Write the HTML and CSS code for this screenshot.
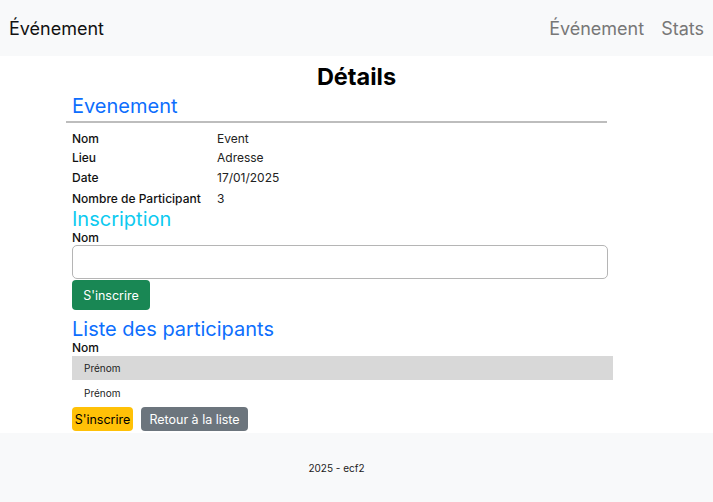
FILE: index.html
```html
<!DOCTYPE html>
<html lang="fr">
<head>
<meta charset="utf-8">
<title>Détails</title>
<link rel="stylesheet" href="styles.css">
</head>
<body>
<header class="topbar">
  <div class="brand">Événement</div>
  <nav class="nav">
    <a class="nav-link">Événement</a>
    <a class="nav-link">Stats</a>
  </nav>
</header>
<main class="main">
  <h1 class="page-title">Détails</h1>
  <section class="content">
    <h2 class="section-title blue first">Evenement</h2>
    <hr class="rule">
    <dl class="details">
      <dt>Nom</dt><dd>Event</dd>
      <dt>Lieu</dt><dd>Adresse</dd>
      <dt class="tall">Date</dt><dd class="tall">17/01/2025</dd>
      <dt class="tall">Nombre de Participant</dt><dd class="tall">3</dd>
    </dl>
    <h2 class="section-title cyan insc">Inscription</h2>
    <label class="label">Nom</label>
    <input class="field" type="text">
    <button class="btn btn-green">S'inscrire</button>
    <h2 class="section-title blue list-title">Liste des participants</h2>
    <div class="label">Nom</div>
    <div class="table">
      <div class="trow grey">Prénom</div>
      <div class="trow">Prénom</div>
    </div>
    <div class="actions">
      <button class="btn btn-yellow">S'inscrire</button>
      <button class="btn btn-grey">Retour à la liste</button>
    </div>
  </section>
</main>
<footer class="footer">2025 - ecf2</footer>
</body>
</html>
```
FILE: styles.css
```css
* { box-sizing: border-box; }
html, body { margin: 0; padding: 0; }
body {
  font-family: Inter, "Liberation Sans", sans-serif;
  color: #111;
  background: #fff;
}
.topbar {
  height: 56px;
  background: #f8f9fa;
  display: flex;
  align-items: center;
  justify-content: space-between;
  padding: 0 9px 0 9px;
}
.brand { font-size: 18px; color: #111; }
.nav { display: flex; gap: 17px; }
.nav-link { font-size: 18px; color: #777; }
.main { height: 377px; }
.page-title {
  margin: 0;
  padding-top: 9px;
  text-align: center;
  font-size: 23.5px;
  font-weight: 700;
  line-height: 24px;
  color: #000;
}
.content { padding: 0 0 0 66px; width: 614px; }
.section-title {
  margin: 0;
  font-weight: 400;
  font-size: 20px;
  line-height: 24px;
  padding-left: 6px;
}
.section-title.first { margin-top: 5px; }
.section-title.insc { margin-top: -2px; }
.blue { color: #0d6efd; }
.cyan { color: #0dcaf0; }
.rule {
  margin: 3px 0 0 0;
  width: 541px;
  border: 0;
  border-top: 2px solid #bdbdbd;
}
.details {
  margin: 6px 0 0 6px;
  display: grid;
  grid-template-columns: 145px 1fr;
  font-size: 12px;
}
.details dt { font-weight: 500; line-height: 19px; color: #111; }
.details dd { margin: 0; line-height: 19px; color: #222; }
.details .tall { line-height: 21px; }
.label {
  display: block;
  margin-left: 6px;
  font-size: 12px;
  line-height: 14px;
  font-weight: 500;
  color: #111;
}
.field {
  display: block;
  margin: 0 0 0 6px;
  width: 536px;
  height: 34px;
  border: 1px solid #b5b5b5;
  border-radius: 5px;
  background: #fff;
}
.btn {
  font-family: Inter, "Liberation Sans", sans-serif;
  font-size: 12.5px;
  border: 0;
  border-radius: 4px;
  cursor: pointer;
}
.btn-green {
  display: block;
  margin: 1px 0 0 6px;
  width: 78px;
  height: 30px;
  background: #198754;
  color: #fff;
}
.list-title { margin-top: 7px; }
.table { margin: 1px 0 0 6px; width: 541px; }
.trow {
  height: 25px;
  display: flex;
  align-items: center;
  padding-left: 12px;
  font-size: 10px;
  color: #222;
}
.trow.grey { background: #d8d8d8; height: 24px; }
.actions { display: flex; gap: 8px; margin: 2px 0 0 6px; }
.btn-yellow {
  height: 24px;
  width: 61px;
  padding: 0;
  background: #ffc107;
  color: #000;
}
.btn-grey {
  height: 24px;
  width: 107px;
  padding: 0;
  background: #6c757d;
  color: #fff;
}
.footer {
  height: 69px;
  background: #f8f9fa;
  display: flex;
  align-items: center;
  justify-content: center;
  padding-right: 40px;
  font-size: 10px;
  color: #222;
}
```
